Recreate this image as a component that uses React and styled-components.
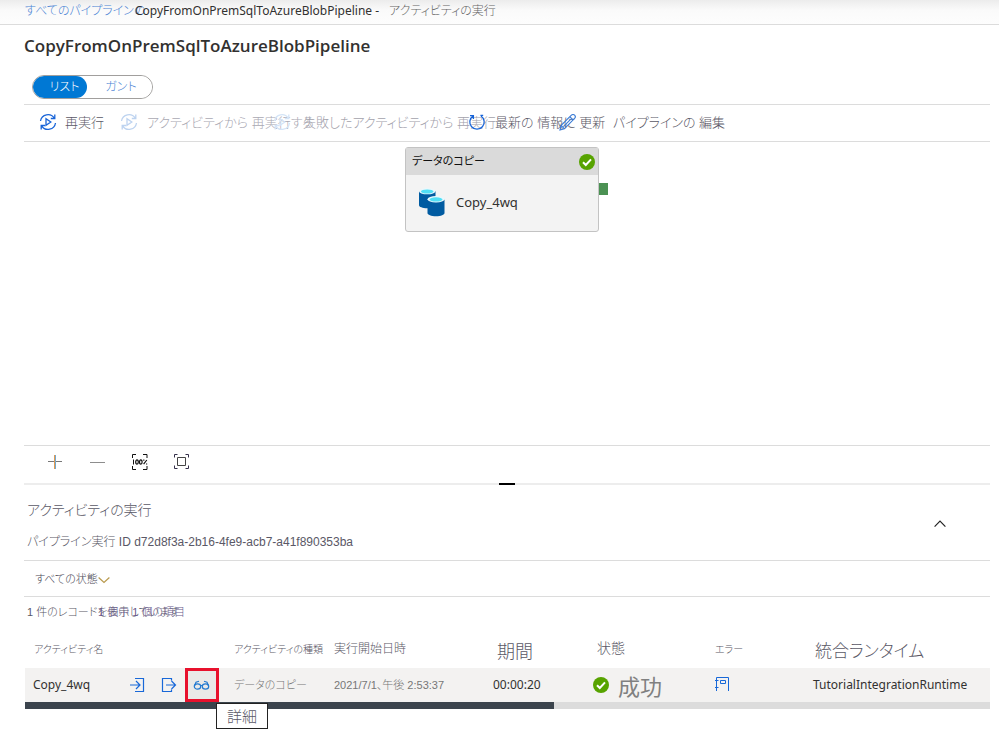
import React from "react";
import styled, { createGlobalStyle } from "styled-components";

const latin = '"Noto Sans", "Noto Sans CJK JP", sans-serif';
const japanese = '"Liberation Sans", "Noto Sans CJK JP", sans-serif';

const GlobalStyle = createGlobalStyle`
  * { box-sizing: border-box; }
  body { margin: 0; background: #fff; color: #323130; font: 12px/16px ${latin}; }
  button, select { font: inherit; color: inherit; background: none; border: 0; padding: 0; margin: 0; }
  button { cursor: pointer; }
  svg { display: block; flex: none; }
`;

const Ja = styled.span`
  font-family: ${japanese};
  font-weight: ${(p) => p.$weight || 300};
  font-feature-settings: "palt";
  font-size: ${(p) => p.$size || 12}px;
  line-height: ${(p) => (p.$size || 12) + 4}px;
  color: ${(p) => p.$color || "#5a5866"};
  white-space: nowrap;
`;

const Breadcrumb = styled.nav`
  display: flex;
  align-items: center;
  height: 25px;
  padding: 0 25px 2px;
  border-bottom: 1px solid #dcdcdc;
  background: linear-gradient(#ececec, #fafafa 10px, #fdfdfd);
  white-space: pre;
`;
const CrumbLink = styled.a`
  display: flex;
  width: 110px;
  text-decoration: none;
`;
const CrumbTail = styled(Ja)` margin-left: 10px; `;

const Page = styled.main`
  min-height: calc(100vh - 25px);
  padding: 0 9px 24px 24px;
`;
const Title = styled.h1`
  margin: 0;
  padding: 9px 0 17px;
  font-family: "Open Sans", sans-serif;
  font-size: 17px;
  line-height: 24px;
  font-weight: 600;
`;
const Segments = styled.div`
  display: inline-flex;
  height: 24px;
  margin-left: 8px;
  border: 1px solid #a19f9d;
  border-radius: 12px;
  overflow: hidden;
  vertical-align: top;
`;
const Segment = styled.button`
  display: flex;
  align-items: center;
  justify-content: center;
  width: ${(p) => (p.$active ? 54 : 65)}px;
  padding-left: ${(p) => (p.$active ? 9 : 3)}px;
  background: ${(p) => (p.$active ? "#0078d4" : "#fff")};
  border-radius: 12px;
`;

const Toolbar = styled.div`
  display: flex;
  align-items: center;
  height: 38px;
  margin-top: 5px;
  padding: 0 0 2px 15px;
  border: solid #dcdcdc;
  border-width: 1px 0;
`;
const ToolButton = styled.button`
  display: flex;
  align-items: center;
  flex: none;
  gap: ${(p) => p.$gap}px;
  width: ${(p) => p.$width}px;
  white-space: nowrap;
  cursor: ${(p) => (p.disabled ? "default" : "pointer")};
`;

const Canvas = styled.section`
  position: relative;
  height: 303px;
`;
const Node = styled.div`
  position: absolute;
  left: 381px;
  top: 5px;
  width: 194px;
  border: 1px solid #c3c3c3;
  border-radius: 3px;
  background: #f3f3f3;
`;
const NodeHead = styled.div`
  display: flex;
  align-items: center;
  justify-content: space-between;
  height: 27px;
  padding: 0 3px 0 6px;
  background: #dadada;
`;
const NodeBody = styled.div`
  display: flex;
  align-items: center;
  gap: 11px;
  height: 56px;
  padding: 0 0 2px 13px;
  font-size: 13px;
`;
const Port = styled.span`
  position: absolute;
  left: 193px;
  top: 35px;
  width: 9px;
  height: 12px;
  background: #4b9153;
`;

const ZoomBar = styled.div`
  display: flex;
  align-items: center;
  gap: 25px;
  height: 38px;
  padding: 0 0 6px 22px;
  border-top: 1px solid #dcdcdc;
`;
const Splitter = styled.div`
  display: flex;
  justify-content: center;
  height: 2px;
  background: #ededed;
  &::before { content: ""; width: 16px; background: #000; }
`;

const PanelHead = styled.header`
  display: flex;
  align-items: center;
  justify-content: space-between;
  height: 75px;
  padding: 3px 44px 0 3px;
`;
const PanelTitles = styled.div`
  display: flex;
  flex-direction: column;
  gap: 15px;
`;
const PanelTitle = styled.h2` margin: 0; line-height: 18px; `;
const RunId = styled(Ja)` margin: 0; `;
const FilterBar = styled.div`
  display: flex;
  align-items: center;
  height: 37px;
  padding-left: 11px;
  border: solid #dcdcdc;
  border-width: 1px 0;
`;
const Filter = styled.select`
  appearance: none;
  width: 63px;
  font-family: ${japanese};
  font-size: 11px;
  font-weight: 300;
  font-feature-settings: "palt";
  color: #494755;
  outline: 0;
`;
const Records = styled.div`
  display: flex;
  align-items: center;
  height: 33px;
  padding: 0 0 2px 3px;
`;
const RecordCount = styled(Ja)` flex: none; width: 71px; `;

const TableWrap = styled.div` margin-left: 1px; `;
const Table = styled.table`
  width: 100%;
  table-layout: fixed;
  border-collapse: collapse;
`;
const Col = styled.col` width: ${(p) => (p.$width ? p.$width + "px" : "auto")}; `;
const Th = styled.th`
  height: 38px;
  padding: ${(p) => p.$top || 0}px 0 0 ${(p) => p.$left || 0}px;
  text-align: left;
  vertical-align: middle;
  line-height: 20px;
`;
const Row = styled.tr` background: #f3f2f1; `;
const Td = styled.td`
  height: 34px;
  padding: 0 0 0 ${(p) => p.$left || 0}px;
  white-space: nowrap;
  vertical-align: middle;
`;
const Cell = styled.div`
  position: relative;
  display: flex;
  align-items: center;
  gap: ${(p) => p.$gap || 0}px;
  height: 34px;
`;
const ActivityName = styled.span` width: 88px; `;
const Succeeded = styled(Ja)` padding-top: 6px; `;
const IconButton = styled.button`
  display: flex;
  align-items: center;
  justify-content: center;
  width: 32px;
  height: 32px;
`;
const DetailButton = styled(IconButton)`
  width: 34px;
  height: 34px;
  border: 3px solid #e8112d;
  background: #eae9e8;
`;
const Tooltip = styled.span`
  position: absolute;
  z-index: 1;
  left: 183px;
  top: 35px;
  display: flex;
  justify-content: center;
  width: 52px;
  padding: 3px 0 2px;
  border: 1px solid #222;
  background: #fff;
`;
const ScrollTrack = styled.div`
  height: 7px;
  background: #dcdcdc;
`;
const ScrollThumb = styled.div`
  width: 54.8%;
  height: 100%;
  background: #3b444d;
`;

const RerunIcon = ({ color = "#1864d8" }) => (
  <svg width="18" height="18" viewBox="0 0 18 18" fill="none" stroke={color} strokeWidth="1.3">
    <path d="M1.500 8A7.500 7.500 0 0 1 15.300 5.200M16.500 10A7.500 7.500 0 0 1 2.700 12.800M15.800 1.500v4h-4M2.200 16.500v-4h4" />
    <path d="M7 5.800v6.400L11.800 9z" />
  </svg>
);
const RefreshIcon = ({ color = "#1864d8" }) => (
  <svg width="18" height="18" viewBox="0 0 18 18" fill="none" stroke={color} strokeWidth="1.3">
    <path d="M5 3a7.200 7.200 0 1 0 8 0M2 2.600h3.400V6M12.400 2.400h2.800" />
  </svg>
);
const PencilIcon = () => (
  <svg width="17" height="17" viewBox="0 0 17 17" fill="none" stroke="#3a7bd5" strokeWidth="1.100">
    <path d="M1 16l1.200-4.600L12.400 1.200a1.900 1.900 0 0 1 3.200 3.200L5.400 14.800zM2.200 11.400l3.200 3.400M11 2.800l3.200 3.200M4.400 12.600l7.400-7.400" />
  </svg>
);
const CheckIcon = () => (
  <svg width="16" height="16" viewBox="0 0 16 16">
    <circle cx="8" cy="8" r="8" fill="#57a300" />
    <path d="M4 8.200l2.800 2.800L12 5.400" fill="none" stroke="#fff" strokeWidth="2" />
  </svg>
);
const DatabaseIcon = () => (
  <svg width="26" height="29" viewBox="0 0 26 29">
    <path d="M0 3.200v14c0 1.600 3.600 3 8 3s8.500-1.400 8.500-3v-14z" fill="#005ba1" />
    <ellipse cx="8.200" cy="3.300" rx="8.200" ry="3" fill="#e8f8fd" />
    <ellipse cx="8.200" cy="3.500" rx="6.300" ry="2" fill="#50dff5" />
    <path d="M8.500 11.500v13.500c0 1.800 3.700 3.200 8.500 3.200s8.500-1.400 8.500-3.200V11.500z" fill="#005ba1" />
    <ellipse cx="17" cy="11.200" rx="8.500" ry="3.200" fill="#e8f8fd" />
    <ellipse cx="17" cy="11.400" rx="6.500" ry="2.100" fill="#50dff5" />
  </svg>
);
const PlusIcon = () => (
  <svg width="18" height="18" viewBox="0 0 18 18">
    <path d="M2 8.500h14" stroke="#777" />
    <path d="M8.500 2v14" stroke="#e39a50" />
    <path d="M9.500 2v14" stroke="#72a9d0" />
  </svg>
);
const MinusIcon = () => (
  <svg width="17" height="18" viewBox="0 0 17 18"><path d="M1 9.500h15" stroke="#8d8d8d" /></svg>
);
const ActualSizeIcon = () => (
  <svg width="17" height="18" viewBox="0 0 17 18">
    <path d="M5 1.500H1.500V5M12 1.500h4V5M1.500 13v3.500H5M16 13v3.500h-4M2.500 6.500v5" fill="none" stroke="#111" />
    <g fill="none" stroke="#111" strokeWidth="1.200">
      <ellipse cx="6" cy="9" rx="1.300" ry="2.200" /><ellipse cx="9.800" cy="9" rx="1.300" ry="2.200" />
      <path d="M15.800 7l-3.200 4.200M12.200 7.200h1.200M15 11h1.200" />
    </g>
  </svg>
);
const FitIcon = () => (
  <svg width="17" height="18" viewBox="0 0 17 18" fill="none">
    <path d="M4.500 1.500h-3v3M12.500 1.500h3v3M1.500 12.500v3h3M15.500 12.500v3h-3" stroke="#35304a" />
    <path d="M4.500 4.500h8v8h-8z" stroke="#444" />
  </svg>
);
const InputIcon = () => (
  <svg width="16" height="16" viewBox="0 0 16 16" fill="none" stroke="#1868d8" strokeWidth="1.200">
    <path d="M6 1.500h8.500v13H6M1 8h10M7 4l4 4-4 4" />
  </svg>
);
const OutputIcon = () => (
  <svg width="16" height="16" viewBox="0 0 16 16" fill="none" stroke="#1868d8" strokeWidth="1.200">
    <path d="M10.500 3.500v-2h-9v13h9v-2M5 8h9.500M10.500 4l4 4-4 4" />
  </svg>
);
const GlassesIcon = () => (
  <svg width="18" height="12" viewBox="0 0 18 12" fill="none" stroke="#2379d0" strokeWidth="1.200">
    <ellipse cx="4.500" cy="7.500" rx="3.200" ry="2.700" /><ellipse cx="12.500" cy="7.500" rx="3.200" ry="2.700" />
    <path d="M7.500 6.500h2M1.400 7L3 3.200l3-1M15.600 7L14 3.200l-3-1" />
  </svg>
);
const ErrorIcon = () => (
  <svg width="16" height="18" viewBox="0 0 16 18" fill="none" stroke="#1868d8">
    <path d="M1.500 15V1.500h12V15M-.5 4.500h4M-.5 11.500h4M5.500 4.500h5v3h-5z" />
  </svg>
);
const Chevron = ({ color, up }) => (
  <svg width="12" height="12" viewBox="0 0 12 12" fill="none" stroke={color} strokeWidth="1.200">
    <path d={up ? "M.6 8.600L6 3.200l5.400 5.400" : "M.6 4.500L6 9.500l5.400-5"} />
  </svg>
);

export default function App() {
  return (
    <>
      <GlobalStyle />
      <Breadcrumb aria-label="breadcrumb">
        <CrumbLink href="#"><Ja $color="#4a83d4">すべてのパイプラインの</Ja></CrumbLink>
        <span>CopyFromOnPremSqlToAzureBlobPipeline -</span>
        <CrumbTail $color="#666">アクティビティの実行</CrumbTail>
      </Breadcrumb>
      <Page>
        <Title>CopyFromOnPremSqlToAzureBlobPipeline</Title>
        <Segments>
          <Segment $active aria-pressed="true"><Ja $color="#fff">リスト</Ja></Segment>
          <Segment aria-pressed="false"><Ja $color="#4a83d4">ガント</Ja></Segment>
        </Segments>
        <Toolbar role="toolbar">
          <ToolButton $width={81} $gap={8}><RerunIcon /><Ja $size={13}>再実行</Ja></ToolButton>
          <ToolButton $width={153} $gap={9} disabled>
            <RerunIcon color="#bdd3f0" /><Ja $size={13} $color="#aaa9b3">アクティビティから 再実行する</Ja>
          </ToolButton>
          <ToolButton $width={195} $gap={12} disabled>
            <RerunIcon color="#d3e4f7" /><Ja $size={13} $color="#a3a2ac">失敗したアクティビティから 再実行</Ja>
          </ToolButton>
          <ToolButton $width={91} $gap={9}><RefreshIcon /><Ja $size={13}>最新の 情報に 更新</Ja></ToolButton>
          <ToolButton $width={165} $gap={37}><PencilIcon /><Ja $size={13}>パイプラインの 編集</Ja></ToolButton>
        </Toolbar>
        <Canvas>
          <Node>
            <NodeHead><Ja $size={11} $color="#111" $weight={400}>データのコピー</Ja><CheckIcon /></NodeHead>
            <NodeBody><DatabaseIcon />Copy_4wq</NodeBody>
            <Port />
          </Node>
        </Canvas>
        <ZoomBar>
          <button aria-label="拡大"><PlusIcon /></button>
          <button aria-label="縮小"><MinusIcon /></button>
          <button aria-label="100%"><ActualSizeIcon /></button>
          <button aria-label="全体を表示"><FitIcon /></button>
        </ZoomBar>
        <Splitter role="separator" />
        <PanelHead>
          <PanelTitles>
            <PanelTitle><Ja $size={14}>アクティビティの実行</Ja></PanelTitle>
            <RunId as="p">パイプライン実行 ID d72d8f3a-2b16-4fe9-acb7-a41f890353ba</RunId>
          </PanelTitles>
          <button aria-label="折りたたむ"><Chevron up color="#222" /></button>
        </PanelHead>
        <FilterBar>
          <Filter aria-label="状態"><option>すべての状態</option></Filter>
          <Chevron color="#b99a4e" />
        </FilterBar>
        <Records>
          <RecordCount $size={11}>1 件のレコードを表示しています</RecordCount>
          <Ja $size={11} $color="#67588a">1 個中 1 個の項目</Ja>
        </Records>
        <TableWrap>
          <Table>
            <colgroup>
              <Col $width={209} /><Col $width={100} /><Col $width={159} /><Col $width={100} />
              <Col $width={122} /><Col $width={98} /><Col />
            </colgroup>
            <thead>
              <tr>
                <Th $left={9}><Ja $size={10}>アクティビティ名</Ja></Th>
                <Th><Ja $size={10}>アクティビティの種類</Ja></Th>
                <Th><Ja>実行開始日時</Ja></Th>
                <Th $left={4} $top={6}><Ja $size={18}>期間</Ja></Th>
                <Th $left={4}><Ja $size={14}>状態</Ja></Th>
                <Th><Ja $size={10}>エラー</Ja></Th>
                <Th $left={2} $top={6}><Ja $size={17}>統合ランタイム</Ja></Th>
              </tr>
            </thead>
            <tbody>
              <Row>
                <Td $left={8}>
                  <Cell>
                    <ActivityName>Copy_4wq</ActivityName>
                    <IconButton aria-label="入力"><InputIcon /></IconButton>
                    <IconButton aria-label="出力"><OutputIcon /></IconButton>
                    <DetailButton aria-label="詳細"><GlassesIcon /></DetailButton>
                    <Tooltip role="tooltip"><Ja $size={15}>詳細</Ja></Tooltip>
                  </Cell>
                </Td>
                <Td><Ja $size={11} $color="#777">データのコピー</Ja></Td>
                <Td><Ja $size={11} $color="#777">2021/7/1、午後 2:53:37</Ja></Td>
                <Td>00:00:20</Td>
                <Td><Cell $gap={9}><CheckIcon /><Succeeded $size={22} $weight={400} $color="#808080">成功</Succeeded></Cell></Td>
                <Td><ErrorIcon /></Td>
                <Td>TutorialIntegrationRuntime</Td>
              </Row>
            </tbody>
          </Table>
          <ScrollTrack><ScrollThumb /></ScrollTrack>
        </TableWrap>
      </Page>
    </>
  );
}
